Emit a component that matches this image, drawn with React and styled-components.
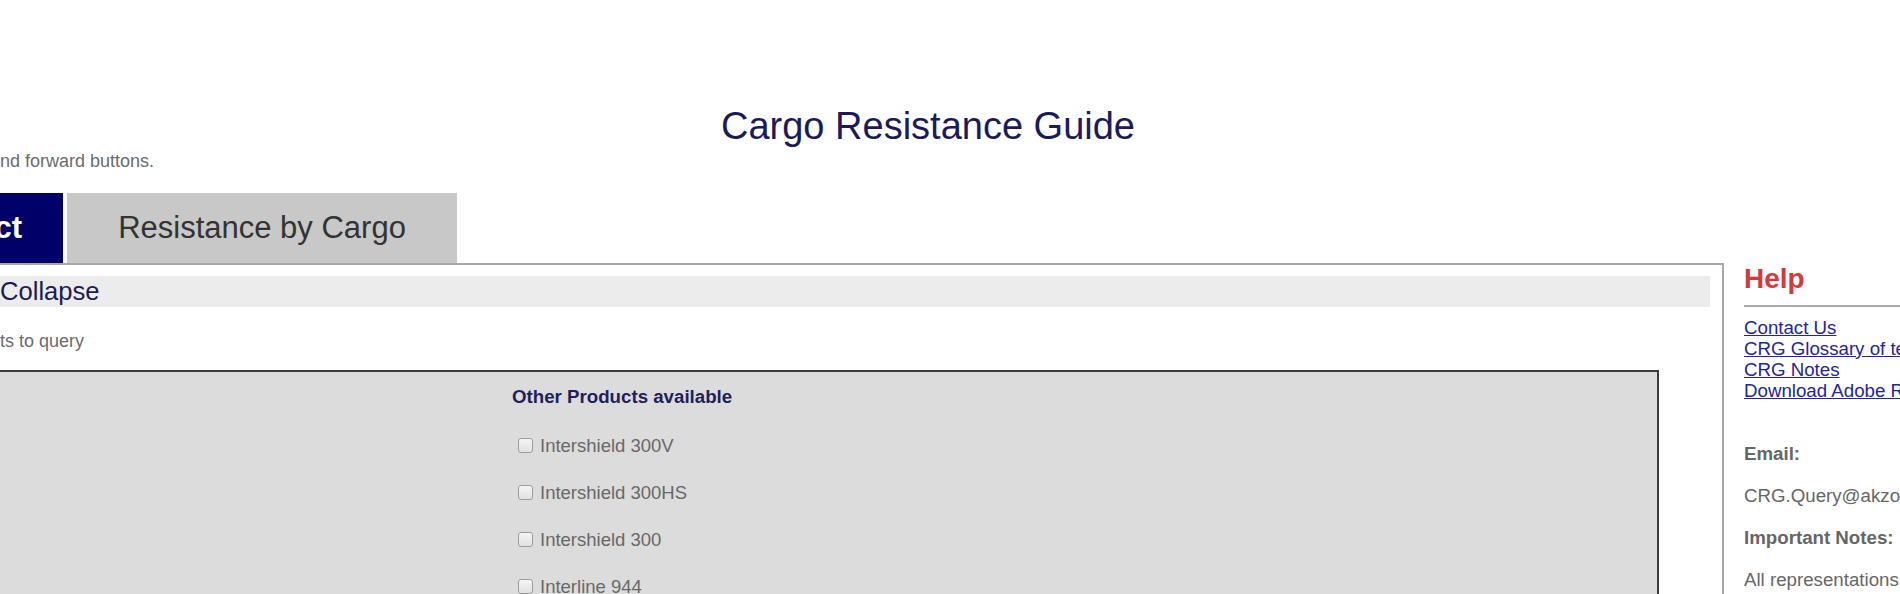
import React from "react";
import styled, { createGlobalStyle } from "styled-components";

const GlobalStyle = createGlobalStyle`
  html,
  body {
    margin: 0;
    padding: 0;
    background: #ffffff;
  }

  body {
    font-family: "Liberation Sans", Arial, sans-serif;
    overflow: hidden;
  }
`;

const Page = styled.div`
  width: 1900px;
  height: 594px;
  overflow: hidden;
`;

const Header = styled.header`
  padding-top: 104px;
`;

const Title = styled.h1`
  margin: 0;
  padding-right: 44px;
  font-size: 38px;
  line-height: 44px;
  font-weight: normal;
  color: #1b1b5b;
  text-align: center;
`;

const Hint = styled.p`
  margin: ${props => props.top || 0}px 0 0;
  font-size: 18px;
  line-height: 20px;
  color: #6b6b6b;
  white-space: nowrap;
`;

const Layout = styled.div`
  display: flex;
  align-items: flex-start;
  margin-top: 22px;
`;

const MainColumn = styled.div`
  flex: none;
  width: 1724px;
`;

const Tabs = styled.div`
  display: flex;
  gap: 4px;
  height: 70px;
`;

/* the active tab is cut by the left edge of the shot, so its label hugs the right */
const Tab = styled.div`
  display: flex;
  align-items: center;
  justify-content: ${props => (props.active ? "flex-end" : "center")};
  box-sizing: border-box;
  width: ${props => props.width}px;
  padding-right: ${props => (props.active ? 41 : 0)}px;
  font-size: 31px;
  font-weight: ${props => (props.active ? "bold" : "normal")};
  color: ${props => (props.active ? "#ffffff" : "#333333")};
  background: ${props => (props.active ? "#000068" : "#c8c8c8")};
  white-space: nowrap;
  overflow: hidden;
`;

const Panel = styled.section`
  height: 340px;
  padding: 11px 12px 0 0;
  border-top: 2px solid #a8a8a8;
  border-right: 2px solid #a8a8a8;
`;

const CollapseBar = styled.div`
  height: 31px;
  font-size: 25.6px;
  line-height: 31px;
  color: #1c1c50;
  background: #ececec;
`;

const ProductBox = styled.div`
  height: 300px;
  margin: 19px 51px 0 0;
  padding-left: 512px;
  background: #dcdcdc;
  border-top: 2px solid #3c3c3c;
  border-right: 2px solid #3c3c3c;
`;

const BoxHeading = styled.div`
  display: flex;
  align-items: center;
  height: 50px;
  font-size: 18.7px;
  font-weight: bold;
  color: #1f1f5c;
`;

const Item = styled.label`
  display: flex;
  align-items: center;
  gap: 7px;
  height: 47px;
  padding-left: 6px;
  font-size: 18.5px;
  color: #686868;
`;

const Check = styled.span`
  flex: none;
  box-sizing: border-box;
  width: 15px;
  height: 15px;
  border: 1px solid #9c9c9c;
  border-radius: 3px;
  background: linear-gradient(#f5f5f5, #e1e1e1);
`;

const Sidebar = styled.aside`
  flex: none;
  width: 300px;
  margin: 69px 0 0 20px;
`;

const HelpTitle = styled.h2`
  margin: 0;
  padding-bottom: 9px;
  font-size: 28px;
  line-height: 34px;
  font-weight: bold;
  color: #d5393b;
  border-bottom: 2px solid #a9a9a9;
`;

const LinkList = styled.ul`
  margin: 10px 0 0;
  padding: 0;
  list-style: none;
`;

const LinkItem = styled.li`
  font-size: 18.7px;
  line-height: 21px;
  white-space: nowrap;
`;

const A = styled.a`
  color: #2424a6;
  text-decoration: underline;
`;

const Note = styled.p`
  margin: ${props => props.top}px 0 0;
  font-size: 18.7px;
  line-height: 21px;
  font-weight: ${props => (props.bold ? "bold" : "normal")};
  color: #666666;
`;

const products = [
  "Intershield 300V",
  "Intershield 300HS",
  "Intershield 300",
  "Interline 944"
];

const links = [
  "Contact Us",
  "CRG Glossary of terms",
  "CRG Notes",
  "Download Adobe Reader"
];

function App() {
  return (
    <Page>
      <GlobalStyle />
      <Header>
        <Title>Cargo Resistance Guide</Title>
        <Hint top={3}>nd forward buttons.</Hint>
      </Header>

      <Layout>
        <MainColumn>
          <Tabs>
            <Tab active width={63}>ct</Tab>
            <Tab width={390}>Resistance by Cargo</Tab>
          </Tabs>

          <Panel>
            <CollapseBar>Collapse</CollapseBar>
            <Hint top={24}>ts to query</Hint>

            <ProductBox>
              <BoxHeading>Other Products available</BoxHeading>
              {products.map(name => (
                <Item key={name}>
                  <Check />
                  {name}
                </Item>
              ))}
            </ProductBox>
          </Panel>
        </MainColumn>

        <Sidebar>
          <HelpTitle>Help</HelpTitle>
          <LinkList>
            {links.map(text => (
              <LinkItem key={text}>
                <A href="#">{text}</A>
              </LinkItem>
            ))}
          </LinkList>

          <Note top={42} bold>Email:</Note>
          <Note top={21}>CRG.Query@akzonobel.com</Note>
          <Note top={21} bold>Important Notes:</Note>
          <Note top={21}>
            All representations in this Cargo Resistance Guide are given in
            good faith.
          </Note>
        </Sidebar>
      </Layout>
    </Page>
  );
}

export default App;
